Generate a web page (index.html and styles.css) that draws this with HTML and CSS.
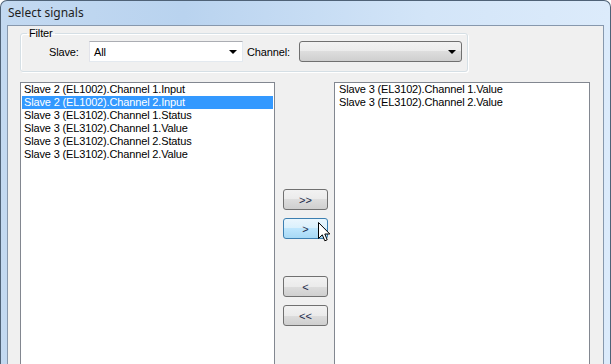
FILE: index.html
```html
<!DOCTYPE html>
<html lang="en">
<head>
    <meta charset="UTF-8">
    <title>Select signals</title>
    <link rel="stylesheet" href="styles.css">
</head>
<body>
    <div class="jendela">
        <div class="judul">Select signals</div>
        <div class="isi">
            <fieldset class="filter">
                <legend>Filter</legend>
                <label class="label-slave">Slave:</label>
                <div class="combo combo-putih">
                    <span>All</span>
                    <span class="panah"></span>
                </div>
                <label class="label-channel">Channel:</label>
                <div class="combo combo-abu">
                    <span></span>
                    <span class="panah"></span>
                </div>
            </fieldset>

            <div class="baris-daftar">
                <ul class="daftar daftar-kiri">
                    <li>Slave 2 (EL1002).Channel 1.Input</li>
                    <li class="dipilih">Slave 2 (EL1002).Channel 2.Input</li>
                    <li>Slave 3 (EL3102).Channel 1.Status</li>
                    <li>Slave 3 (EL3102).Channel 1.Value</li>
                    <li>Slave 3 (EL3102).Channel 2.Status</li>
                    <li>Slave 3 (EL3102).Channel 2.Value</li>
                </ul>

                <div class="tombol-kolom">
                    <button class="tombol">&gt;&gt;</button>
                    <button class="tombol tombol-hover">&gt;</button>
                    <button class="tombol tombol-bawah">&lt;</button>
                    <button class="tombol">&lt;&lt;</button>
                    <svg class="kursor" width="13" height="21" viewBox="0 0 13 21">
                        <path d="M0.5 0.5 L0.5 16.5 L4.3 12.8 L6.8 18.8 L9.2 17.8 L6.8 12 L11.8 12 Z" fill="#ffffff" stroke="#000000" stroke-width="1"/>
                    </svg>
                </div>

                <ul class="daftar daftar-kanan">
                    <li>Slave 3 (EL3102).Channel 1.Value</li>
                    <li>Slave 3 (EL3102).Channel 2.Value</li>
                </ul>
            </div>
        </div>
    </div>
</body>
</html>
```
FILE: styles.css
```css
/* --- UKURAN LAYAR --- */
body {
    margin: 0;
    width: 611px;
    height: 364px;
    overflow: hidden;
    background: #ffffff;
    font-family: "Liberation Sans", Arial, sans-serif;
    font-size: 11px;
    letter-spacing: -0.15px;
    color: #000000;
}

/* --- BINGKAI JENDELA WIN7 --- */
.jendela {
    box-sizing: border-box;
    width: 611px;
    height: 364px;
    display: flex;
    flex-direction: column;
    padding: 0 6px 0 6px;
    border: 1px solid #4f6277;
    border-bottom: none;
    border-radius: 7px 7px 0 0;
    background: linear-gradient(90deg, #c3d9f1 0%, #b9d3ef 30%, #d3e5f8 70%, #dcebfb 100%);
    overflow: hidden;
}

.judul {
    height: 24px;
    line-height: 24px;
    padding-left: 1px;
    font-family: "Noto Sans", "Open Sans", sans-serif;
    font-size: 12px;
    letter-spacing: 0;
    color: #1e1e1e;
}

.isi {
    flex: 1;
    background-color: #f0f0f0;
    border: 1px solid #8798ad;
    border-bottom: none;
    padding: 0 0 0 12px;
}

/* --- GROUP BOX FILTER --- */
.filter {
    box-sizing: border-box;
    width: 448px;
    height: 45px;
    margin: 1px 0 0 0;
    padding: 0;
    border: 1px solid #d5dfe5;
    border-radius: 3px;
    box-shadow: inset 1px 1px 0 #ffffff, 1px 1px 0 #ffffff;
    display: flex;
    align-items: center;
}

.filter legend {
    padding: 0 2px;
    margin-left: 6px;
    line-height: 13px;
}

.label-slave {
    width: 40px;
    margin: -8px 0 0 28px;
}

.label-channel {
    margin: -8px 0 0 4px;
    width: 52px;
}

.combo {
    box-sizing: border-box;
    height: 21px;
    margin-top: -8px;
    display: flex;
    align-items: center;
    justify-content: space-between;
    padding: 0 5px 0 4px;
}

.combo-putih {
    width: 154px;
    background: #ffffff;
    border: 1px solid #e3e9ef;
    border-top-color: #abadb3;
    border-left-color: #e2e3ea;
}

.combo-abu {
    width: 163px;
    border: 1px solid #707070;
    border-radius: 3px;
    background: linear-gradient(#f2f2f2 0%, #ebebeb 50%, #dddddd 50%, #cfcfcf 100%);
}

.panah {
    width: 0;
    height: 0;
    border-left: 4px solid transparent;
    border-right: 4px solid transparent;
    border-top: 4px solid #000000;
    margin-top: 1px;
}

/* --- DAFTAR SINYAL --- */
.baris-daftar {
    display: flex;
    margin-top: 10px;
}

.daftar {
    box-sizing: border-box;
    list-style: none;
    margin: 0;
    padding: 0 1px 1px 1px;
    height: 300px;
    background: #ffffff;
    border: 1px solid #828790;
}

.daftar li {
    height: 13px;
    line-height: 13px;
    padding-left: 2px;
    white-space: nowrap;
}

.daftar-kiri {
    width: 255px;
}

.daftar-kanan {
    width: 256px;
    padding-left: 2px;
}

.dipilih {
    background-color: #3399ff;
    color: #ffffff;
}

.tombol-kolom {
    position: relative;
    width: 59px;
    display: flex;
    flex-direction: column;
    align-items: flex-start;
    padding: 107px 0 0 8px;
    box-sizing: border-box;
}

.tombol {
    box-sizing: border-box;
    width: 45px;
    height: 21px;
    margin-bottom: 8px;
    padding: 0;
    font-family: "Liberation Sans", Arial, sans-serif;
    font-size: 11px;
    color: #1c2a4a;
    border: 1px solid #707070;
    border-radius: 3px;
    background: linear-gradient(#f2f2f2 0%, #ebebeb 50%, #dddddd 50%, #cfcfcf 100%);
}

.tombol-hover {
    border-color: #3c7fb1;
    background: linear-gradient(#eaf6fd 0%, #d9f0fc 50%, #bee6fd 50%, #a7d9f5 100%);
}

.tombol-kolom .tombol-bawah {
    margin-top: 29px;
}

.kursor {
    position: absolute;
    left: 43px;
    top: 140px;
}
```
